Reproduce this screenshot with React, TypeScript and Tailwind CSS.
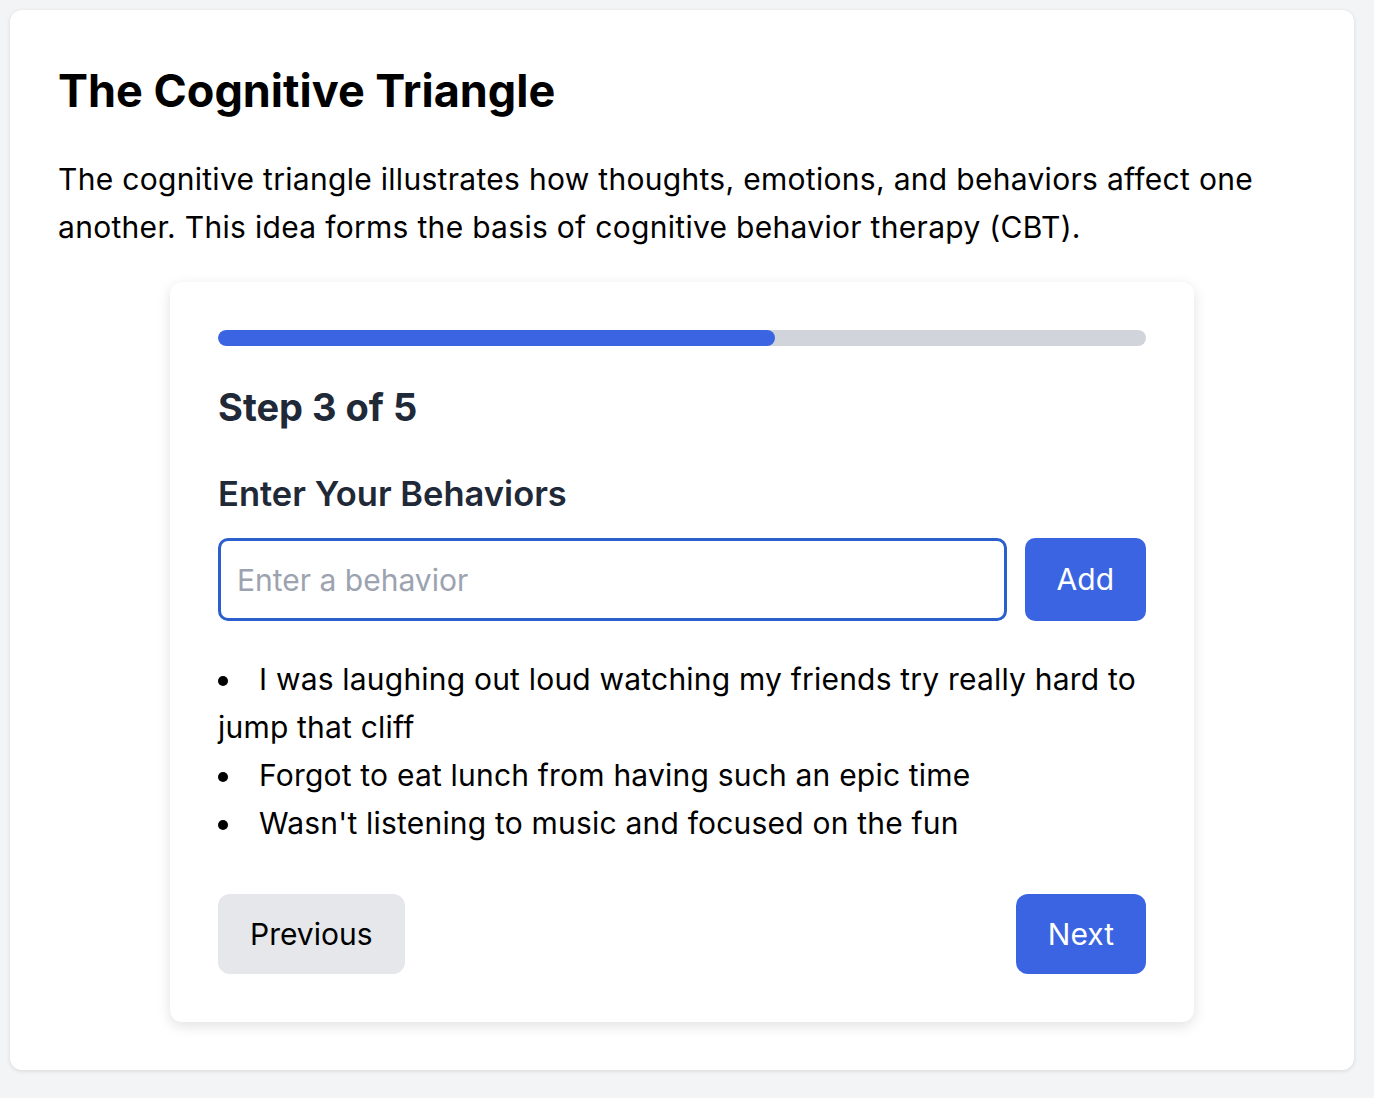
import { useState } from "react";

const behaviors = [
  "I was laughing out loud watching my friends try really hard to jump that cliff",
  "Forgot to eat lunch from having such an epic time",
  "Wasn't listening to music and focused on the fun",
];

export default function App() {
  const [value, setValue] = useState("");
  const step = 3;
  const total = 5;

  return (
    <div className="min-h-screen bg-[#f3f4f6] py-[10px] pl-[10px] pr-[20px] font-['Inter','Liberation_Sans',sans-serif]">
      <div className="rounded-xl bg-white px-[48px] pb-[48px] pt-[53px] shadow-[0_1px_4px_rgba(0,0,0,0.12)]">
        <h1 className="text-[45px] font-bold leading-[56px] text-black">The Cognitive Triangle</h1>
        <p className="mt-[36px] text-[30px] leading-[48px] tracking-[0.3px] text-black">
          The cognitive triangle illustrates how thoughts, emotions, and behaviors affect one another. This idea forms the basis of cognitive behavior therapy (CBT).
        </p>

        <div className="mx-auto mt-[31px] max-w-[1024px] rounded-xl bg-white p-[48px] shadow-[0_4px_14px_rgba(0,0,0,0.12)]">
          <div className="h-[16px] w-full overflow-hidden rounded-full bg-[#d1d5db]">
            <div className="h-full rounded-full bg-[#3a64e2]" style={{ width: `${(step / total) * 100}%` }} />
          </div>

          <h2 className="mt-[41px] text-[38px] font-bold leading-[40px] text-[#1f2937]">
            Step {step} of {total}
          </h2>

          <h3 className="mt-[47px] text-[34.5px] font-semibold leading-[40px] text-[#1f2937]">Enter Your Behaviors</h3>

          <div className="mt-[24px] flex items-stretch gap-[18px]">
            <input
              value={value}
              onChange={(e) => setValue(e.target.value)}
              placeholder="Enter a behavior"
              className="h-[83px] flex-1 rounded-[10px] border-[3px] border-[#2b5fcc] px-[16px] text-[30px] text-black outline-none placeholder:text-[#9ca3af]"
            />
            <button type="button" className="rounded-[10px] bg-[#3a64e2] px-[32px] text-[30px] text-white">
              Add
            </button>
          </div>

          <ul className="mt-[34px] list-inside list-disc text-[30px] leading-[48px] tracking-[0.2px] text-black">
            {behaviors.map((b) => (
              <li key={b}>{b}</li>
            ))}
          </ul>

          <div className="mt-[47px] flex justify-between">
            <button type="button" className="h-[80px] rounded-[12px] bg-[#e5e7eb] px-[32px] text-[30px] text-black">
              Previous
            </button>
            <button type="button" className="h-[80px] rounded-[12px] bg-[#3a64e2] px-[32px] text-[30px] text-white">
              Next
            </button>
          </div>
        </div>
      </div>
    </div>
  );
}
